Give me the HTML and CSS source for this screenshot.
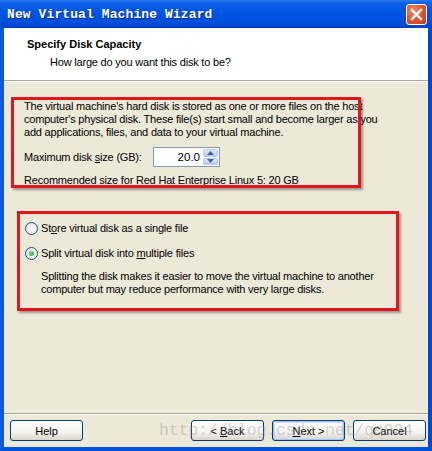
FILE: index.html
```html
<!DOCTYPE html>
<html lang="en">
<head>
  <meta charset="UTF-8" />
  <title>New Virtual Machine Wizard</title>
  <link rel="stylesheet" href="styles.css">
</head>
<body>
<div class="window">
  <div class="titlebar">
    <span class="title">New Virtual Machine Wizard</span>
    <div class="close">
      <svg width="13" height="13" viewBox="0 0 13 13"><path d="M2 2 L11 11 M11 2 L2 11" stroke="#fff" stroke-width="2.4" stroke-linecap="square"/></svg>
    </div>
  </div>
  <div class="frame">
    <div class="header">
      <div class="h-title">Specify Disk Capacity</div>
      <div class="h-sub">How large do you want this disk to be?</div>
    </div>
    <div class="body">
      <p class="intro">The virtual machine's hard disk is stored as one or more files on the host<br>computer's physical disk. These file(s) start small and become larger as you<br>add applications, files, and data to your virtual machine.</p>
      <div class="size-row">
        <span class="size-label">Maximum disk <u>s</u>ize (GB):</span>
        <div class="spin">
          <span class="spin-val">20.0</span>
          <div class="spin-btns">
            <div class="spin-btn"><svg width="7" height="4" viewBox="0 0 7 4"><path d="M0 4 L3.5 0 L7 4Z" fill="#4d6185"/></svg></div>
            <div class="spin-btn"><svg width="7" height="4" viewBox="0 0 7 4"><path d="M0 0 L3.5 4 L7 0Z" fill="#4d6185"/></svg></div>
          </div>
        </div>
      </div>
      <p class="recommend">Recommended size for Red Hat Enterprise Linux 5: 20 GB</p>
      <div class="options">
        <label class="radio-row"><span class="radio"></span><span>St<u>o</u>re virtual disk as a single file</span></label>
        <label class="radio-row"><span class="radio checked"></span><span>Split virtual disk into <u>m</u>ultiple files</span></label>
        <p class="desc">Splitting the disk makes it easier to move the virtual machine to another<br>computer but may reduce performance with very large disks.</p>
      </div>
    </div>
    <div class="footer">
      <button class="btn help">Help</button>
      <div class="nav-btns">
        <button class="btn">&lt; <u>B</u>ack</button>
        <button class="btn default"><u>N</u>ext &gt;</button>
        <button class="btn cancel">Cancel</button>
      </div>
    </div>
  </div>
  <div class="mark mark-1"></div>
  <div class="mark mark-2"></div>
  <div class="watermark">http://blog.csdn.net/qq934</div>
</div>
</body>
</html>
```

FILE: styles.css
```css
* { box-sizing: border-box; margin: 0; padding: 0; }
html, body { width: 432px; height: 451px; background: #fff; overflow: hidden; }
body { font-family: 'Liberation Sans', Arial, sans-serif; font-size: 11px; letter-spacing: -0.2px; color: #000; }
.window { position: relative; width: 432px; height: 451px; display: flex; flex-direction: column; }
.titlebar { height: 28px; display: flex; align-items: center; justify-content: space-between; padding: 0 5px 0 7px;
  background: linear-gradient(#2a78f2 0%, #0a5ee8 12%, #0055e5 40%, #0050dd 80%, #0043c4 100%); }
.title { font-family: 'Liberation Mono', monospace; font-weight: bold; font-size: 13px; color: #fff; text-shadow: 1px 1px #0b2a8a; letter-spacing: 0.1px; }
.close { width: 21px; height: 21px; border: 1px solid #fff; border-radius: 3px; display: flex; align-items: center; justify-content: center;
  background: radial-gradient(circle at 35% 30%, #f08a6a, #e0502c 55%, #c63d18); }
.frame { flex: 1; display: flex; flex-direction: column; background: #ece9d8; border: 4px solid #0053e1; border-top: 0; border-left-color: #0a58e4; border-right-color: #0048d4; }
.header { height: 53px; background: #fff; padding: 9px 0 0 23px; border-bottom: 1px solid #aca899; box-shadow: 0 1px 0 #fff; }
.h-title { font-weight: bold; font-size: 11px; line-height: 14px; letter-spacing: 0; }
.h-sub { padding-left: 23px; margin-top: 4px; line-height: 14px; }
.body { flex: 1; padding: 19px 10px 0 20px; }
.intro { line-height: 13px; white-space: nowrap; }
.size-row { display: flex; align-items: center; margin-top: 8px; height: 20px; }
.size-label { width: 129px; }
.spin { width: 67px; height: 20px; background: #fff; border: 1px solid #7f9db9; display: flex; align-items: center; justify-content: flex-end; padding: 1px; }
.spin-val { padding-right: 3px; font-size: 11.5px; letter-spacing: 0; }
.spin-btns { display: flex; flex-direction: column; gap: 1px; height: 16px; }
.spin-btn { width: 15px; flex: 1; display: flex; align-items: center; justify-content: center; border-radius: 2px;
  background: linear-gradient(#dbe6fd, #b7cbf5); border: 1px solid #b5c8f0; }
.recommend { margin-top: 7px; line-height: 13px; }
.options { margin-top: 33px; padding-left: 1px; }
.radio-row { display: flex; align-items: center; gap: 3px; height: 16px; margin-bottom: 9px; }
.radio { width: 13px; height: 13px; border-radius: 50%; border: 1px solid #1c5180; background: radial-gradient(circle at 70% 70%, #fff, #e0ddd6); display: inline-block; position: relative; }
.radio.checked::after { content: ""; position: absolute; left: 3px; top: 3px; width: 5px; height: 5px; border-radius: 50%; background: radial-gradient(circle at 35% 35%, #7be07b, #21a121); }
.desc { padding-left: 16px; line-height: 13px; white-space: nowrap; }
.footer { height: 34px; border-top: 1px solid #aca899; box-shadow: inset 0 1px 0 #fff; display: flex; align-items: center; justify-content: space-between; padding: 0 2px 0 6px; }
.nav-btns { display: flex; gap: 8px; }
.btn { width: 73px; height: 21px; font-family: inherit; font-size: 11px; letter-spacing: 0; color: #000; border: 1px solid #003c74; border-radius: 3px;
  background: linear-gradient(#fff, #f4f3ee 60%, #d8d5c9); }
.btn.default { box-shadow: inset 0 0 0 1px #a8c3ee, inset 0 0 0 2px #cddbf5; }
.mark { position: absolute; border: 3px solid #e3171b; box-shadow: 2px 2px 2px rgba(0,0,0,.35); pointer-events: none; }
.mark-1 { left: 11px; top: 97px; width: 350px; height: 91px; }
.mark-2 { left: 17px; top: 211px; width: 382px; height: 100px; }
.watermark { position: absolute; left: 159px; top: 421px; font-family: 'Liberation Mono', monospace; font-size: 16.6px; color: rgba(150,150,150,.4); pointer-events: none; white-space: nowrap; }
```
